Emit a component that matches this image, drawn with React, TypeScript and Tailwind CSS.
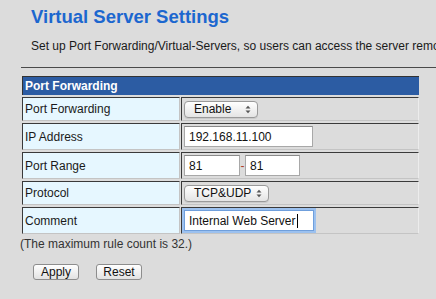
import React from 'react';

const font = "font-['Liberation_Sans',Arial,Helvetica,sans-serif]";

const SelectBox = ({ label, width }: { label: string; width: string }) => (
  <div
    className={`${width} h-[17px] rounded-[4px] border border-[#9a9a9a] bg-gradient-to-b from-white to-[#e4e4e4] shadow-[0_1px_0_rgba(0,0,0,0.08)] flex items-center justify-between pl-[9px] pr-[6px] text-[12px] text-[#111]`}
  >
    <span>{label}</span>
    <svg width="6" height="9" viewBox="0 0 6 9">
      <path d="M0.5 3.5 L3 0.8 L5.5 3.5 Z" fill="#555" />
      <path d="M0.5 5.5 L3 8.2 L5.5 5.5 Z" fill="#555" />
    </svg>
  </div>
);

const TextBox = ({ value, width, focused }: { value: string; width: string; focused?: boolean }) => (
  <div
    className={`${width} h-[21px] bg-white flex items-center pl-[4px] text-[12px] text-[#111] ${
      focused
        ? 'border border-[#6f9fdc] shadow-[0_0_0_2px_#9cc1ef]'
        : 'border border-[#a8a8a8] border-t-[#8a8a8a]'
    }`}
  >
    <span>{value}</span>
    {focused && <span className="ml-[1px] w-[1px] h-[14px] bg-black" />}
  </div>
);

const Row = ({ label, h, children }: { label: string; h: string; children: React.ReactNode }) => (
  <div className={`flex gap-[1px] ${h}`}>
    <div className="w-[158px] bg-[#e6f7ff] border border-t-[#3a3a3a] border-l-[#3a3a3a] border-b-[#c4c4c4] border-r-[#c4c4c4] flex items-center pl-[2px] text-[12px] text-[#1a1a1a]">
      {label}
    </div>
    <div className="flex-1 border border-t-[#3a3a3a] border-l-[#3a3a3a] border-b-[#c4c4c4] border-r-[#ececec] flex items-center pl-[2px]">
      {children}
    </div>
  </div>
);

const MacButton = ({ label }: { label: string }) => (
  <div className="w-[46px] h-[16px] rounded-[3px] border border-[#8d8d8d] bg-gradient-to-b from-white to-[#e2e2e2] flex items-center justify-center text-[12px] text-[#111]">
    {label}
  </div>
);

export default function App() {
  return (
    <div className={`w-[436px] h-[299px] bg-[#dcdcdc] overflow-hidden ${font}`}>
      <h1 className="pl-[31px] pt-[6px] text-[18.5px] leading-[22px] font-bold text-[#1c67cf]">
        Virtual Server Settings
      </h1>
      <p className="pl-[31px] mt-[10px] text-[12px] leading-[16px] text-[#1a1a1a] whitespace-nowrap">
        Set up Port Forwarding/Virtual-Servers, so users can access the server remotely.
      </p>
      <div className="ml-[21px] mt-[13px] h-[1px] bg-[#4a4a4a]" />

      <div className="ml-[22px] mt-[8px] w-[397px] flex flex-col gap-[2px]">
        <div className="h-[19px] bg-[#2c5ca3] border-t border-l border-[#333] flex items-center pl-[2px] text-[12px] font-bold text-white">
          Port Forwarding
        </div>
        <Row label="Port Forwarding" h="h-[24px]">
          <SelectBox label="Enable" width="w-[74px]" />
        </Row>
        <Row label="IP Address" h="h-[27px]">
          <TextBox value="192.168.11.100" width="w-[129px]" />
        </Row>
        <Row label="Port Range" h="h-[27px]">
          <div className="flex items-center">
            <TextBox value="81" width="w-[56px]" />
            <span className="w-[5px] text-center text-[12px] text-[#b0412a]">-</span>
            <TextBox value="81" width="w-[55px]" />
          </div>
        </Row>
        <Row label="Protocol" h="h-[24px]">
          <SelectBox label="TCP&UDP" width="w-[85px]" />
        </Row>
        <Row label="Comment" h="h-[27px]">
          <TextBox value="Internal Web Server" width="w-[130px]" focused />
        </Row>
      </div>

      <p className="pl-[20px] mt-[3px] text-[12px] leading-[15px] text-[#333]">
        (The maximum rule count is 32.)
      </p>
      <div className="pl-[33px] mt-[12px] flex gap-[17px]">
        <MacButton label="Apply" />
        <MacButton label="Reset" />
      </div>
    </div>
  );
}
